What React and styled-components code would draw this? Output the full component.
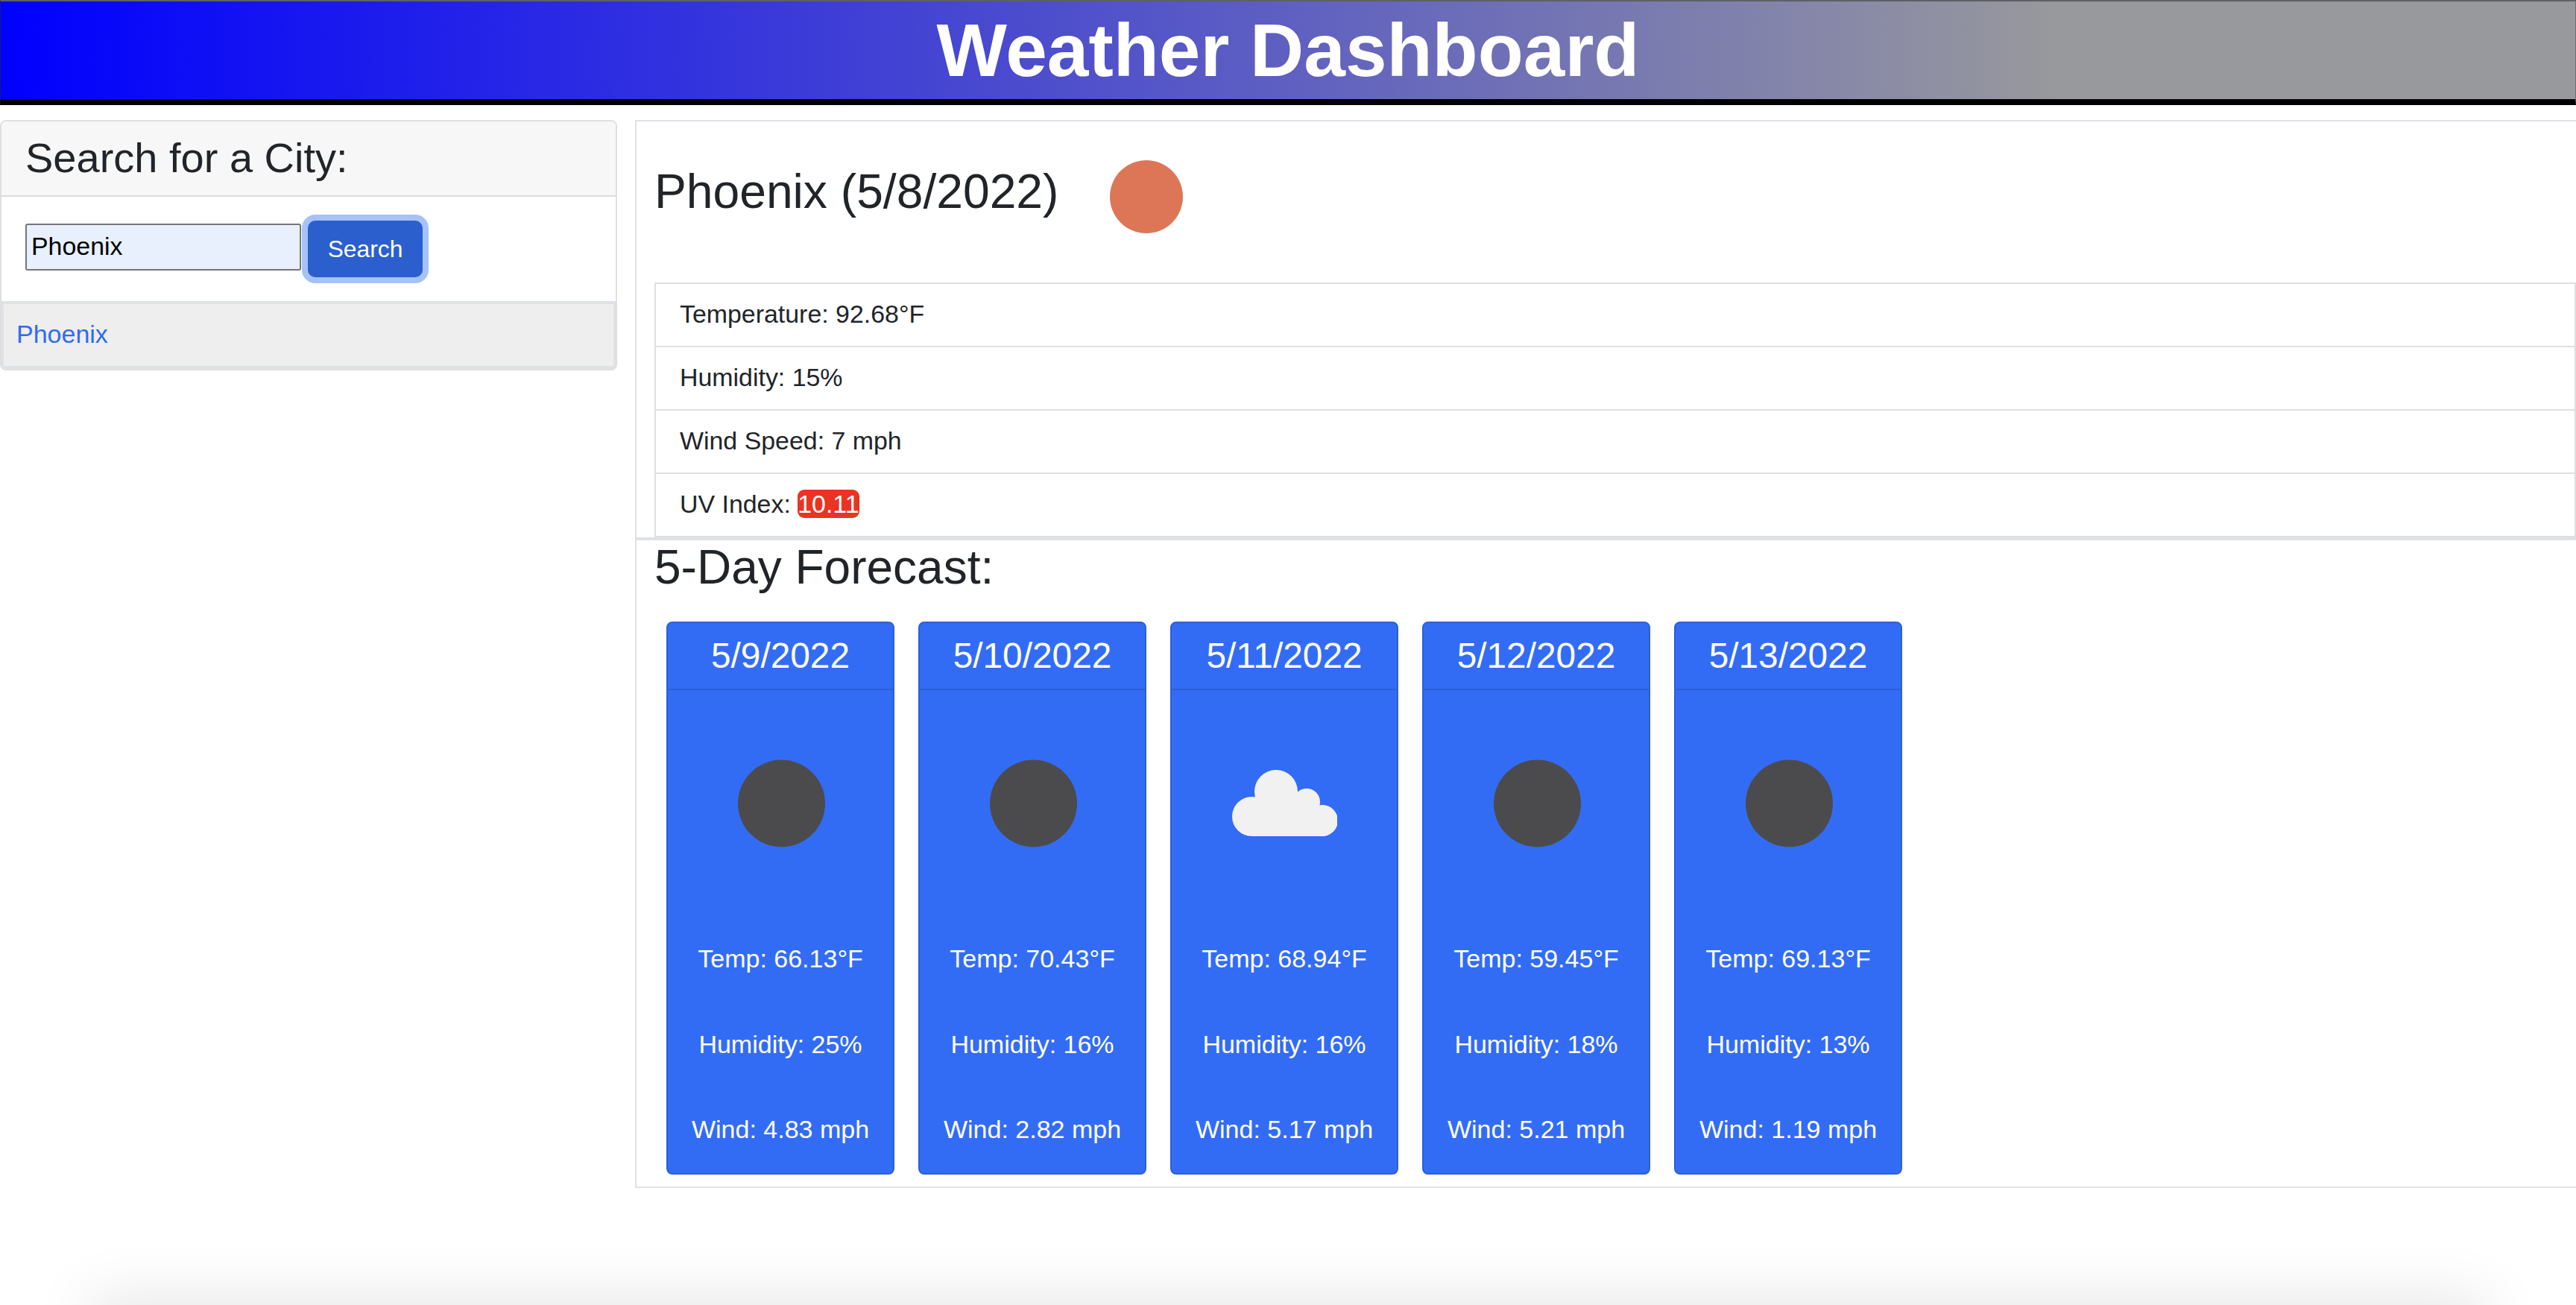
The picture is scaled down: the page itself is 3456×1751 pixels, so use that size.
import React from "react";
import styled, { createGlobalStyle } from "styled-components";

const Global = createGlobalStyle`
  html, body { margin: 0; padding: 0; height: 100%; overflow: hidden; background: #fff; }
  body { font-family: "Liberation Sans", Arial, sans-serif; color: #212529; }
  * { box-sizing: border-box; }
`;

const Page = styled.div`
  position: relative;
  height: 1751px;
  overflow: hidden;
`;

const Header = styled.header`
  height: 141px;
  border-top: 2px solid #5e6066;
  border-left: 1px solid #1a1a80;
  border-right: 1px solid #6c6d70;
  border-bottom: 8px solid #000;
  background: linear-gradient(90deg, #0000ff 0%, #98999c 80%);
  display: flex;
  align-items: center;
  justify-content: center;
`;

const Title = styled.h1`
  margin: 0;
  color: #fff;
  font-size: 100px;
  font-weight: 700;
  line-height: 131px;
`;

const Main = styled.main`
  display: flex;
  align-items: flex-start;
  gap: 24px;
  padding-top: 20px;
  width: 3600px;
`;

const SearchCard = styled.aside`
  width: 828px;
  flex: none;
  border: 2px solid #dfdfdf;
  border-radius: 8px;
  overflow: hidden;
`;

const SearchHeading = styled.h2`
  margin: 0;
  height: 101px;
  padding-left: 32px;
  background: #f7f7f7;
  border-bottom: 2px solid #dcdcdc;
  font-size: 56px;
  font-weight: 400;
  line-height: 98px;
`;

const SearchForm = styled.form`
  height: 140px;
  padding-left: 32px;
  display: flex;
  align-items: center;
  gap: 9px;
  background: #fff;
`;

const CityInput = styled.input`
  width: 370px;
  height: 63px;
  margin-bottom: 5px;
  padding: 0 0 2px 6px;
  border: 2px solid #767676;
  border-radius: 3px;
  background: #e8f0fe;
  color: #000;
  font-family: inherit;
  font-size: 33.9px;
  outline: none;
`;

const SearchButton = styled.button`
  width: 154px;
  height: 76px;
  border: none;
  border-radius: 10px;
  background: #2b5fce;
  box-shadow: 0 0 0 8px #a5c2f9;
  color: #fff;
  font-family: inherit;
  font-size: 31.8px;
  padding: 0;
`;

const HistoryItem = styled.div`
  height: 91px;
  padding-left: 17px;
  background: #eeeeee;
  border: solid #dee2e6;
  border-width: 4px 3px 4px 3px;
  font-size: 34px;
  line-height: 80px;
`;

const HistoryLink = styled.a`
  color: #2f6bf5;
  text-decoration: none;
`;

const ResultCard = styled.section`
  width: 2700px;
  flex: none;
  border: 2px solid #dee2e6;
  padding: 52px 24px 0;
  height: 1433px;
`;

const CurrentTitleRow = styled.div`
  display: flex;
  align-items: center;
  gap: 69px;
  height: 98px;
  margin-bottom: 66px;
`;

const CurrentTitle = styled.h2`
  margin: 0 0 14px;
  font-size: 64.2px;
  font-weight: 400;
  line-height: 84px;
  white-space: nowrap;
`;

const SunIcon = styled.svg`
  width: 98px;
  height: 98px;
  flex: none;
  display: block;
`;

const StatList = styled.ul`
  list-style: none;
  margin: 0;
  padding: 0;
  width: 2578px;
  border: 2px solid #dfdfdf;
  border-bottom: 0;
  font-size: 33.9px;
`;

const StatRow = styled.li`
  height: 85px;
  padding-left: 32px;
  border-bottom: 2px solid #dfdfdf;
  line-height: 81px;
`;

const UvBadge = styled.span`
  display: inline-block;
  background: #ea3323;
  color: #fff;
  border-radius: 9px;
  line-height: 38px;
  vertical-align: baseline;
`;

const Divider = styled.hr`
  margin: 0 -24px;
  height: 4px;
  border: 0;
  background: #dee2e6;
`;

const ForecastTitle = styled.h2`
  margin: 0 0 37px;
  font-size: 64px;
  font-weight: 400;
  line-height: 72px;
`;

const ForecastRow = styled.div`
  display: flex;
  gap: 32px;
  padding-left: 16px;
`;

const DayCard = styled.article`
  width: 306px;
  height: 742px;
  border: 2px solid #2b5fd9;
  border-radius: 8px;
  background: #336cf4;
  color: #fff;
  text-align: center;
`;

const DayDate = styled.h3`
  margin: 0;
  height: 90px;
  border-bottom: 2px solid #2b5fd9;
  font-size: 47.8px;
  font-weight: 400;
  line-height: 88px;
`;

const IconArea = styled.div`
  height: 304px;
  display: flex;
  align-items: center;
  justify-content: center;
`;

const DayStat = styled.p`
  margin: 0;
  height: 114.5px;
  font-size: 34px;
  line-height: 112px;
  white-space: nowrap;
`;

const BottomGlow = styled.div`
  position: absolute;
  left: 130px;
  right: 130px;
  bottom: -60px;
  height: 60px;
  box-shadow: 0 0 80px 10px rgba(0, 0, 0, 0.1);
`;

function WeatherIcon({ cloud }) {
  return (
    <svg width="142" height="118" viewBox="0 0 142 118" style={{ display: "block" }}>
      {cloud ? (
        <g fill="#f1f1f1" transform="translate(1 14)">
          <circle cx="59" cy="29" r="29" />
          <circle cx="100" cy="43" r="18" />
          <circle cx="26.5" cy="62.5" r="26.5" />
          <circle cx="121" cy="68" r="21" />
          <rect x="26" y="40" width="74" height="49" />
          <rect x="100" y="55" width="21" height="34" />
        </g>
      ) : (
        <circle cx="72.5" cy="59" r="58.5" fill="#4b4b4d" />
      )}
    </svg>
  );
}

const days = [
  { date: "5/9/2022", temp: "66.13", hum: "25", wind: "4.83" },
  { date: "5/10/2022", temp: "70.43", hum: "16", wind: "2.82" },
  { date: "5/11/2022", temp: "68.94", hum: "16", wind: "5.17", cloud: true },
  { date: "5/12/2022", temp: "59.45", hum: "18", wind: "5.21" },
  { date: "5/13/2022", temp: "69.13", hum: "13", wind: "1.19" },
];

export default function App() {
  return (
    <Page>
      <Global />
      <Header>
        <Title>Weather Dashboard</Title>
      </Header>
      <Main>
        <SearchCard>
          <SearchHeading>Search for a City:</SearchHeading>
          <SearchForm onSubmit={(e) => e.preventDefault()}>
            <CityInput defaultValue="Phoenix" />
            <SearchButton type="submit">Search</SearchButton>
          </SearchForm>
          <HistoryItem>
            <HistoryLink href="#">Phoenix</HistoryLink>
          </HistoryItem>
        </SearchCard>
        <ResultCard>
          <CurrentTitleRow>
            <CurrentTitle>Phoenix (5/8/2022)</CurrentTitle>
            <SunIcon viewBox="0 0 98 98">
              <circle cx="49" cy="49" r="49" fill="#dd7657" />
            </SunIcon>
          </CurrentTitleRow>
          <StatList>
            <StatRow>Temperature: 92.68°F</StatRow>
            <StatRow>Humidity: 15%</StatRow>
            <StatRow>Wind Speed: 7 mph</StatRow>
            <StatRow>
              UV Index: <UvBadge>10.11</UvBadge>
            </StatRow>
          </StatList>
          <Divider />
          <ForecastTitle>5-Day Forecast:</ForecastTitle>
          <ForecastRow>
            {days.map((d) => (
              <DayCard key={d.date}>
                <DayDate>{d.date}</DayDate>
                <IconArea>
                  <WeatherIcon cloud={d.cloud} />
                </IconArea>
                <DayStat>Temp: {d.temp}°F</DayStat>
                <DayStat>Humidity: {d.hum}%</DayStat>
                <DayStat>Wind: {d.wind} mph</DayStat>
              </DayCard>
            ))}
          </ForecastRow>
        </ResultCard>
      </Main>
      <BottomGlow />
    </Page>
  );
}
